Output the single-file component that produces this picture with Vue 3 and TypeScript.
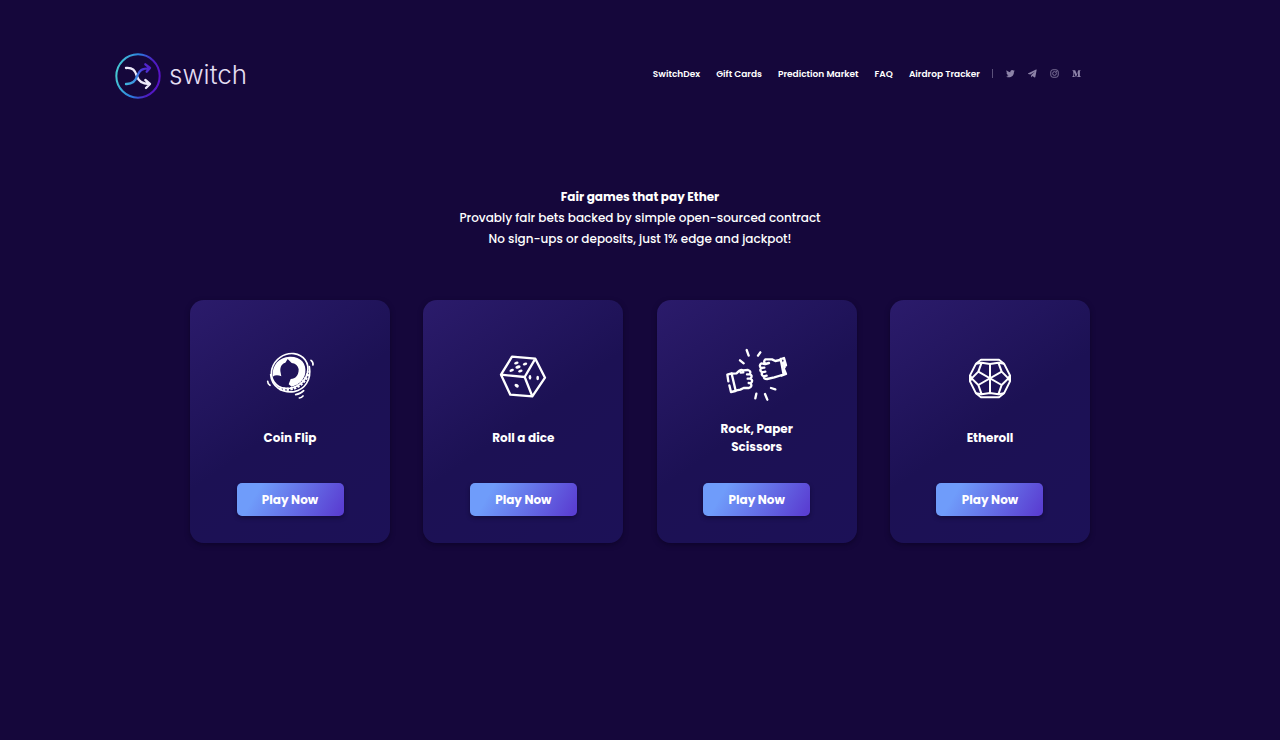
<script setup lang="ts">
interface NavItem {
  label: string
}

interface Game {
  id: 'coin' | 'dice' | 'hands' | 'ether'
  title: string
}

const navItems: NavItem[] = [
  { label: 'SwitchDex' },
  { label: 'Gift Cards' },
  { label: 'Prediction Market' },
  { label: 'FAQ' },
  { label: 'Airdrop Tracker' },
]

const games: Game[] = [
  { id: 'coin', title: 'Coin Flip' },
  { id: 'dice', title: 'Roll a dice' },
  { id: 'hands', title: 'Rock, Paper Scissors' },
  { id: 'ether', title: 'Etheroll' },
]
</script>

<template>
  <div class="page">
    <header class="header">
      <a class="logo" href="#" aria-label="switch">
        <svg class="logo-mark" viewBox="28 24 138 138" aria-hidden="true">
          <defs>
            <linearGradient id="ring" x1="0" x2="1" y1="0.4" y2="0.6">
              <stop offset="0" stop-color="#46c8d2" />
              <stop offset="0.45" stop-color="#2b7de0" />
              <stop offset="0.75" stop-color="#4a1fc0" />
              <stop offset="1" stop-color="#5a12c8" />
            </linearGradient>
            <linearGradient id="strand" gradientUnits="userSpaceOnUse" x1="58" x2="134" y1="118" y2="68">
              <stop offset="0" stop-color="#3fb6dc" />
              <stop offset="0.5" stop-color="#3d7fe6" />
              <stop offset="0.75" stop-color="#4b35d6" />
              <stop offset="1" stop-color="#5420cc" />
            </linearGradient>
          </defs>
          <circle cx="97" cy="93" r="65" fill="none" stroke="url(#ring)" stroke-width="6" />
          <g fill="none" stroke-width="7" stroke-linecap="round" stroke-linejoin="round">
            <path d="M61 69 C82 67 88 77 93 92 C98 108 107 117 130 117 M119 105 L133 117 L121 129" stroke="#eeeafa" />
            <path d="M61 117 C82 118 90 108 95 92 C101 76 109 70 131 70 M119 58 L133 69 L123 80" stroke="url(#strand)" />
          </g>
        </svg>
        <span class="logo-name">switch</span>
      </a>
      <nav class="nav" aria-label="Main">
        <a v-for="item in navItems" :key="item.label" class="nav-link" href="#">{{ item.label }}</a>
        <div class="social">
          <a href="#" aria-label="Twitter">
            <svg viewBox="0 0 24 24"><path d="M23.6 4.9c-.9.4-1.800.6-2.700.8 1-.6 1.700-1.500 2.100-2.600-.9.5-2 .9-3 1.100A4.900 4.900 0 0 0 11.600 8.600C7.700 8.400 4.100 6.500 1.700 3.600c-1.300 2.200-.7 5 1.500 6.500-.8 0-1.500-.2-2.200-.6 0 2.300 1.600 4.400 3.900 4.900-.7.2-1.500.2-2.200.1.600 1.900 2.400 3.300 4.600 3.300A9.700 9.700 0 0 1 .2 19.900C9.500 25.800 21.400 19.500 21.200 7.400c1-.7 1.800-1.500 2.400-2.500z" /></svg>
          </a>
          <a href="#" aria-label="Telegram">
            <svg viewBox="0 0 24 24"><path d="M23 2.500 19.500 21.500c-.3 1.300-1 1.600-2 1l-5.500-4-2.700 2.700c-.3.3-.6.5-1.100.5l.4-5.700L19 6.500 6 14.600.7 13c-1.200-.4-1.200-1.200.2-1.700L21.500 1.400c1-.3 1.800.2 1.500 1.100z" /></svg>
          </a>
          <a href="#" aria-label="Instagram">
            <svg viewBox="0 0 24 24"><g fill="none" stroke="currentColor" stroke-width="2.200"><rect x="2" y="2" width="20" height="20" rx="6" /><circle cx="12" cy="12" r="5" /></g><circle cx="17.800" cy="6.200" r="1.500" /></svg>
          </a>
          <a href="#" aria-label="Medium">
            <svg viewBox="0 0 24 24"><path d="M2 3h6.500l4.300 10L16.700 3H23v1.200L21 6v12l2 1.800V21h-9v-1.200l2-1.800V8l-5 13h-1L5 8.500V17l2.500 2.800V21H1v-1.200L3.300 17V6.500L1 4V3z" /></svg>
          </a>
        </div>
      </nav>
    </header>

    <main>
      <section class="intro">
        <h1>Fair games that pay Ether</h1>
        <p>Provably fair bets backed by simple open-sourced contract</p>
        <p>No sign-ups or deposits, just 1% edge and jackpot!</p>
      </section>

      <section class="games">
        <article v-for="game in games" :key="game.id" class="card">
          <svg v-if="game.id === 'coin'" class="game-icon" viewBox="9 15 192 186" aria-hidden="true">
            <g fill="none" stroke="#fff" stroke-linecap="round">
              <ellipse cx="104" cy="93" rx="57" ry="50" stroke-width="5" transform="rotate(-35 104 93)" />
              <path d="M47 104 C50 140 82 160 117 155 C149 149 170 120 163 80" stroke-width="5" />
              <path d="M73 145 C116 156 151 133 161 94" stroke-width="10" stroke-dasharray="7 4" stroke-linecap="butt" />
              <path d="M168 61 Q175 66 174 75 M38 124 Q38 132 45 136 M122 164 Q137 162 146 152 M133 174 Q140 173 144 168" stroke-width="5" />
            </g>
            <path d="M53 110 C50 75 72 51 104 50 C137 49 155 70 151 98 C148 119 132 134 110 140 L101 133 L107 117 C122 117 131 106 131 88 C128 75 120 70 110 69 L98 57 L91 68 C78 72 74 84 77 98 L79 109 Q64 102 53 110 Z" fill="#fff" />
          </svg>

          <svg v-else-if="game.id === 'dice'" class="game-icon" viewBox="4 0 192 186" aria-hidden="true">
            <g fill="none" stroke="#fff" stroke-width="7" stroke-linejoin="round">
              <path d="M67 35 L137 41 L166 98 L128 154 L62 149 L34 89 Z M34 89 L105 96 L137 41 M105 96 L128 154" />
            </g>
            <g fill="#fff">
              <ellipse cx="80" cy="54" rx="7" ry="4" transform="rotate(-20 80 54)" />
              <ellipse cx="106" cy="57" rx="7" ry="4" transform="rotate(-20 106 57)" />
              <ellipse cx="85" cy="66" rx="8" ry="5" transform="rotate(-15 85 66)" />
              <ellipse cx="66" cy="76" rx="7" ry="4" transform="rotate(-20 66 76)" />
              <ellipse cx="92" cy="78" rx="7" ry="4" transform="rotate(-20 92 78)" />
              <ellipse cx="81" cy="122" rx="7" ry="5" transform="rotate(35 81 122)" />
              <ellipse cx="121" cy="97" rx="4" ry="7" />
              <ellipse cx="144" cy="99" rx="4" ry="7" />
            </g>
          </svg>

          <svg v-else-if="game.id === 'hands'" class="game-icon" viewBox="30 15 192 186" aria-hidden="true">
            <g fill="none" stroke="#fff" stroke-width="7" stroke-linecap="round" stroke-linejoin="round">
              <path d="M95 30 L101 47 M136 37 L129 47 M75 61 L86 70 M124 161 L121 175 M150 162 L157 179 M168 144 L181 148" />
              <path d="M50 100 L37 104 L40 124 M43 136 L48 156 L61 153 M50 101 L62 152" />
              <path d="M51 101 L65 100 C72 91 80 89 84 91 L99 90 Q110 94 104 103 L96 103 M104 103 Q115 106 106 116 L98 116 M107 116 Q116 122 107 130 L101 129 M107 130 Q113 140 102 144 L86 144 L76 149 L61 152 M77 98 L85 97" />
              <path d="M198 57 L207 54 L213 76 M207 88 L213 102 L199 107 M197 57 L206 104 M206 67 L209 82" />
              <path d="M195 60 L181 63 L171 58 L151 58 Q144 64 151 72 L162 69 M150 72 L139 70 Q130 77 139 84 L148 83 M139 84 Q132 91 141 97 L151 95 M142 97 Q137 106 147 109 L155 107 M147 109 Q145 117 156 117 L178 112 L201 105" />
            </g>
          </svg>

          <svg v-else class="game-icon" viewBox="9 0 192 186" aria-hidden="true">
            <g fill="none" stroke="#fff" stroke-width="6" stroke-linejoin="round">
              <path d="M78 44 L132 44 L147 56 L165 91 L165 109 L147 145 L132 157 L78 157 L63 145 L45 109 L45 91 L63 56 Z" />
              <path d="M80 53 L105 57 L130 53 L140 80 L160 100 L140 120 L130 148 L105 144 L80 148 L70 120 L50 100 L70 80 Z" />
              <path d="M105 57 V144 M70 80 L140 120 M140 80 L70 120 M80 53 L63 56 M130 53 L147 56 M80 148 L63 145 M130 148 L147 145 M45 91 L50 100 L45 109 M165 91 L160 100 L165 109" />
            </g>
          </svg>

          <h2>{{ game.title }}</h2>
          <button type="button">Play Now</button>
        </article>
      </section>
    </main>
  </div>
</template>

<style>
body {
  margin: 0;
  background: #15073b;
}
</style>

<style scoped>
.page {
  min-height: 100vh;
  box-sizing: border-box;
  padding: 53px 24px 40px;
  background: #15073b;
  color: #fff;
  font-family: Poppins, Inter, "Open Sans", sans-serif;
}

.header {
  display: flex;
  align-items: center;
  justify-content: space-between;
  max-width: 966px;
  margin: 0 auto;
  padding-right: 84px;
}

.logo {
  display: flex;
  align-items: center;
  gap: 8px;
  color: #e4def2;
  text-decoration: none;
}

.logo-mark {
  width: 46px;
  height: 46px;
}

.logo-name {
  font-family: Inter, sans-serif;
  font-size: 26px;
  font-weight: 300;
  line-height: 40px;
  padding-bottom: 2px;
}

.nav {
  display: flex;
  align-items: center;
  gap: 16px;
  padding-bottom: 5px;
}

.nav-link {
  color: #fff;
  font-size: 9px;
  font-weight: 600;
  line-height: 16px;
  text-decoration: none;
  white-space: nowrap;
}

.social {
  display: flex;
  align-items: center;
  gap: 13px;
  margin-left: -4px;
  padding-left: 14px;
  background: linear-gradient(#5b507a, #5b507a) left center / 1px 9px no-repeat;
}

.social a {
  display: block;
  color: #8d83a8;
}

.social svg {
  display: block;
  width: 9px;
  height: 9px;
  fill: currentColor;
}

.intro {
  margin-top: 87px;
  text-align: center;
}

.intro h1,
.intro p {
  margin: 0;
  font-size: 12px;
  font-weight: 500;
  line-height: 21px;
}

.intro h1 {
  font-weight: 700;
}

.games {
  display: grid;
  grid-template-columns: repeat(4, 200px);
  justify-content: space-between;
  max-width: 900px;
  margin: 51px auto 0;
}

.card {
  display: flex;
  flex-direction: column;
  align-items: center;
  padding: 45px 46px 27px;
  border-radius: 14px;
  background: linear-gradient(145deg, #2b1b6b 0%, #1c1154 50%, #1c1157 100%);
  box-shadow: 0 2px 5px rgba(8, 2, 28, 0.5);
}

.game-icon {
  width: 64px;
  height: 62px;
}

h2 {
  display: flex;
  align-items: center;
  min-height: 36px;
  margin: 13px 0 27px;
  font-size: 12px;
  font-weight: 700;
  line-height: 18px;
  text-align: center;
}

button {
  width: 107px;
  height: 33px;
  padding: 0;
  border: 0;
  border-radius: 5px;
  background: linear-gradient(120deg, #6f9cfa 20%, #5a3fd2 95%);
  box-shadow: 0 2px 4px rgba(8, 2, 28, 0.45);
  color: #fff;
  font-family: inherit;
  font-size: 12px;
  font-weight: 700;
  line-height: 18px;
  cursor: pointer;
}
</style>
